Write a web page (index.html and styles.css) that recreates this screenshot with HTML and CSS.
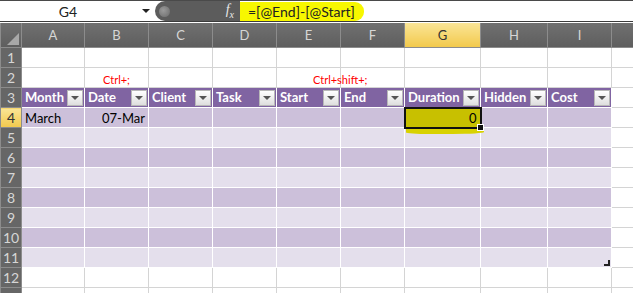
FILE: index.html
```
<!DOCTYPE html>
<html lang="en">
<head>
    <meta charset="UTF-8">
    <meta name="viewport" content="width=device-width, initial-scale=1.0">
    <title>Duration formula</title>
    <link rel="stylesheet" href="styles.css">
</head>
<body>
    <div class="formula-bar">
        <div class="name-box">
            <span class="cell-ref">G4</span>
            <span class="name-arrow"></span>
        </div>
        <div class="pill">
            <span class="pill-dot"></span>
            <span class="fx">f<sub>x</sub></span>
        </div>
        <div class="formula-input">
            <span class="formula-mark">=[@End]-[@Start]</span>
        </div>
    </div>

    <table class="sheet">
        <colgroup>
            <col style="width:21px">
            <col style="width:63px">
            <col style="width:64px">
            <col style="width:64px">
            <col style="width:64px">
            <col style="width:64px">
            <col style="width:64px">
            <col style="width:76px">
            <col style="width:67px">
            <col style="width:64px">
            <col style="width:22px">
        </colgroup>
        <thead>
            <tr class="col-heads">
                <th class="corner"><span class="corner-tri"></span></th>
                <th>A</th>
                <th>B</th>
                <th>C</th>
                <th>D</th>
                <th>E</th>
                <th>F</th>
                <th class="active">G</th>
                <th>H</th>
                <th>I</th>
                <th></th>
            </tr>
        </thead>
        <tbody id="sheetBody">
            <tr>
                <th class="rh">1</th>
                <td></td><td></td><td></td><td></td><td></td><td></td><td></td><td></td><td></td><td></td>
            </tr>
            <tr>
                <th class="rh">2</th>
                <td></td>
                <td class="hint center">Ctrl+;</td>
                <td></td>
                <td></td>
                <td class="hint shift">Ctrl+shift+;</td>
                <td></td><td></td><td></td><td></td><td></td>
            </tr>
            <tr class="tbl-head">
                <th class="rh">3</th>
                <td><span class="lbl">Month</span><span class="dd"></span></td>
                <td><span class="lbl">Date</span><span class="dd"></span></td>
                <td><span class="lbl">Client</span><span class="dd"></span></td>
                <td><span class="lbl">Task</span><span class="dd"></span></td>
                <td><span class="lbl">Start</span><span class="dd"></span></td>
                <td><span class="lbl">End</span><span class="dd"></span></td>
                <td><span class="lbl">Duration</span><span class="dd"></span></td>
                <td><span class="lbl">Hidden</span><span class="dd"></span></td>
                <td><span class="lbl">Cost</span><span class="dd"></span></td>
                <td class="plain"></td>
            </tr>
            <tr class="band-dark">
                <th class="rh active">4</th>
                <td>March</td>
                <td class="num">07-Mar</td>
                <td></td>
                <td></td>
                <td></td>
                <td></td>
                <td class="num selected">0<span class="handle"></span></td>
                <td></td>
                <td></td>
                <td class="plain"></td>
            </tr>
        </tbody>
    </table>

    <script>
        // rows 5 to 12: empty banded table rows, then plain sheet rows
        const body = document.getElementById('sheetBody');
        for (let r = 5; r <= 13; r++) {
            const row = document.createElement('tr');
            if (r <= 11) {
                row.className = r % 2 === 0 ? 'band-dark' : 'band-light';
            }
            // row 13 only peeks in at the bottom edge, so no number
            let cells = `<th class="rh">${r <= 12 ? r : ''}</th>`;
            for (let c = 0; c < 9; c++) {
                const last = (r === 11 && c === 8) ? '<span class="resize"></span>' : '';
                cells += `<td>${last}</td>`;
            }
            cells += r <= 11 ? '<td class="plain"></td>' : '<td></td>';
            row.innerHTML = cells;
            body.appendChild(row);
        }
    </script>
</body>
</html>
```

FILE: styles.css
```
body {
    margin: 0;
    background-color: #ffffff;
    font-family: Lato, "Liberation Sans", sans-serif;
    overflow: hidden;
}

/* formula bar */
.formula-bar {
    display: flex;
    height: 20px;
    border-top: 1px solid #4a4a4a;
    border-bottom: 1px solid #3c3c3c;
    background-color: #ffffff;
}
.name-box {
    width: 155px;
    display: flex;
    align-items: center;
}
.cell-ref {
    width: 136px;
    text-align: center;
    font-size: 14px;
    color: #222;
}
.name-arrow {
    border-left: 4px solid transparent;
    border-right: 4px solid transparent;
    border-top: 4px solid #222;
    margin-left: 6px;
}
.pill {
    width: 85px;
    background-color: #5c5c5c;
    border-radius: 11px 0 0 11px;
    display: flex;
    align-items: center;
    justify-content: space-between;
    padding: 0 6px 0 4px;
    box-sizing: border-box;
}
.pill-dot {
    width: 11px;
    height: 11px;
    border-radius: 50%;
    background: radial-gradient(circle at 40% 40%, #9a9a9a, #6a6a6a);
}
.fx {
    font-family: "Liberation Serif", serif;
    font-style: italic;
    font-size: 14px;
    color: #e8e8e8;
}
.fx sub {
    font-size: 10px;
}
.formula-input {
    flex: 1;
    display: flex;
    align-items: center;
}
.formula-mark {
    background-color: #f7f700;
    height: 19px;
    line-height: 19px;
    padding: 0 9px 0 8px;
    border-radius: 0 9px 9px 0;
    font-size: 14px;
    color: #222;
}

/* sheet */
.sheet {
    border-collapse: collapse;
    table-layout: fixed;
    width: 633px;
    margin-top: 1px;
    font-size: 13px;
}
.sheet th,
.sheet td {
    height: 20px;
    padding: 0 3px;
    border: 1px solid #d4d4d4;
    white-space: nowrap;
    overflow: visible;
    box-sizing: border-box;
}
.sheet .col-heads th {
    height: 24px;
    font-weight: normal;
    font-size: 13px;
    color: #d6d6d6;
    background: linear-gradient(#707070, #5e5e5e);
    border: 1px solid #8c8c8c;
    border-top: none;
}
.sheet .col-heads th.active {
    background: linear-gradient(#fae596, #f2c94c);
    color: #333;
}
.corner {
    position: relative;
}
.corner-tri {
    position: absolute;
    right: 2px;
    bottom: 2px;
    border-left: 12px solid transparent;
    border-bottom: 12px solid #a8a8a8;
}
.sheet .rh {
    font-weight: normal;
    font-size: 14px;
    color: #d6d6d6;
    background-color: #666666;
    text-align: center;
    padding: 0;
    border-color: #8c8c8c;
}
.sheet .rh.active {
    background: linear-gradient(#fae596, #f2c94c);
    color: #333;
}

.sheet td.hint {
    color: #ff0000;
    font-size: 11px;
    vertical-align: bottom;
    padding-bottom: 1px;
}
.center {
    text-align: center;
}
.sheet td.shift {
    padding-left: 36px;
}

/* table styling */
.tbl-head td {
    background-color: #8064a2;
    color: #ffffff;
    font-weight: bold;
    border-color: #ffffff;
}
.sheet .tbl-head td {
    padding: 0 1px 0 3px;
}
.tbl-head td.plain {
    background-color: #ffffff;
    border-color: #d4d4d4;
}
.lbl {
    float: left;
    line-height: 19px;
}
.dd {
    float: right;
    width: 14px;
    height: 14px;
    margin-top: 2px;
    background: linear-gradient(#ffffff, #dedede);
    border: 1px solid #b8b8b8;
    position: relative;
}
.dd::after {
    content: "";
    position: absolute;
    left: 3px;
    top: 5px;
    border-left: 4px solid transparent;
    border-right: 4px solid transparent;
    border-top: 4px solid #555;
}
.band-dark td {
    background-color: #ccc0da;
    border-color: #ffffff;
}
.band-light td {
    background-color: #e4dfec;
    border-color: #ffffff;
}
.band-dark td.plain,
.band-light td.plain {
    background-color: #ffffff;
    border-color: #d4d4d4;
}
.num {
    text-align: right;
}
.band-dark td.selected {
    background-color: #c8c000;
    border: 2px solid #111;
    position: relative;
}
.selected::before {
    content: "";
    position: absolute;
    left: 0;
    right: -4px;
    bottom: -7px;
    height: 5px;
    background-color: #d8d200;
    border-radius: 0 0 40% 30%;
    z-index: 1;
}
.handle {
    position: absolute;
    right: -4px;
    bottom: -4px;
    width: 5px;
    height: 5px;
    background-color: #111;
    border: 1px solid #fff;
    z-index: 2;
}
.band-light td:nth-child(10) {
    position: relative;
}
.resize {
    position: absolute;
    right: 1px;
    bottom: 1px;
    width: 4px;
    height: 4px;
    border-right: 2px solid #222;
    border-bottom: 2px solid #222;
}
```
